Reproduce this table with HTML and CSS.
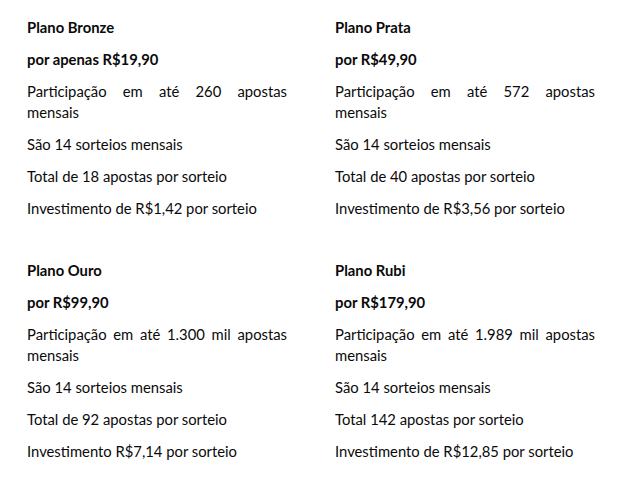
FILE: index.html
```html
<!DOCTYPE html>
<html lang="pt-BR">
<head>
<meta charset="utf-8">
<title>Planos</title>
<link rel="stylesheet" href="styles.css">
</head>
<body>
<main class="plans">
  <section class="plan">
    <p class="title">Plano Bronze</p>
    <p class="price">por apenas R$19,90</p>
    <p>Participação em até 260 apostas mensais</p>
    <p>São 14 sorteios mensais</p>
    <p>Total de 18 apostas por sorteio</p>
    <p>Investimento de R$1,42 por sorteio</p>
  </section>
  <section class="plan">
    <p class="title">Plano Prata</p>
    <p class="price">por R$49,90</p>
    <p>Participação em até 572 apostas mensais</p>
    <p>São 14 sorteios mensais</p>
    <p>Total de 40 apostas por sorteio</p>
    <p>Investimento de R$3,56 por sorteio</p>
  </section>
  <section class="plan">
    <p class="title">Plano Ouro</p>
    <p class="price">por R$99,90</p>
    <p>Participação em até 1.300 mil apostas mensais</p>
    <p>São 14 sorteios mensais</p>
    <p>Total de 92 apostas por sorteio</p>
    <p>Investimento R$7,14 por sorteio</p>
  </section>
  <section class="plan">
    <p class="title">Plano Rubi</p>
    <p class="price">por R$179,90</p>
    <p>Participação em até 1.989 mil apostas mensais</p>
    <p>São 14 sorteios mensais</p>
    <p>Total 142 apostas por sorteio</p>
    <p>Investimento de R$12,85 por sorteio</p>
  </section>
</main>
</body>
</html>
```

FILE: styles.css
```css
html, body {
  margin: 0;
  padding: 0;
  background: #ffffff;
}
body {
  font-family: "Lato", "Liberation Sans", sans-serif;
  font-size: 14.8px;
  color: #0a0a0a;
}
.plans {
  display: grid;
  grid-template-columns: 260px 260px;
  column-gap: 48px;
  row-gap: 30px;
  padding: 17px 0 0 27px;
}
.plan p {
  margin: 0 0 11px 0;
  line-height: 21px;
  text-align: justify;
}
.plan .title,
.plan .price {
  font-weight: 700;
}
```
